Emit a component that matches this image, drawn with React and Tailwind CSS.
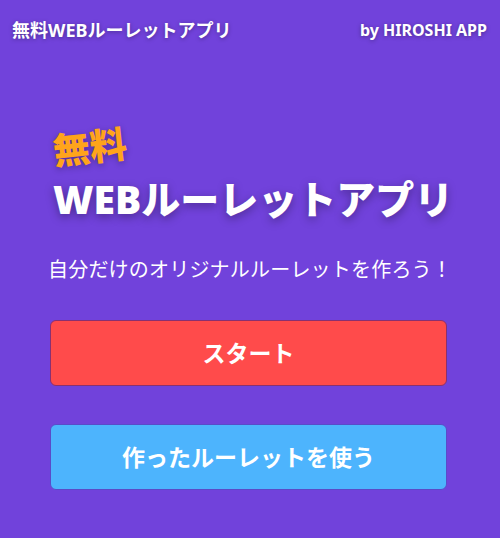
import React from 'react';

const App = () => {
    return (
        <div
            className="w-[500px] h-[538px] bg-[#7142db] text-white overflow-hidden"
            style={{ fontFamily: '"Noto Sans", "Noto Sans CJK JP", sans-serif' }}
        >
            {/* Header */}
            <div className="flex items-center justify-between px-3 pt-[21px]">
                <span className="text-[18px] font-bold leading-none [text-shadow:0_1px_4px_rgba(0,0,0,0.35)]">無料WEBルーレットアプリ</span>
                <span className="text-[16px] font-bold leading-none pr-[1px] [text-shadow:0_1px_4px_rgba(0,0,0,0.35)]">by HIROSHI APP</span>
            </div>

            {/* Hero */}
            <div className="pl-[53px] pt-[93px]">
                <div className="text-[37px] font-black leading-none text-[#ffa41b] -rotate-6 origin-left w-fit [text-shadow:0_2px_6px_rgba(0,0,0,0.3)]">
                    無料
                </div>
                <h1 className="mt-[10px] text-[39px] font-black leading-none [text-shadow:0_3px_10px_rgba(0,0,0,0.35)]">
                    WEBルーレットアプリ
                </h1>
            </div>

            <p className="mt-[42px] text-center text-[20px] leading-none tracking-[0.01em]">
                自分だけのオリジナルルーレットを作ろう！
            </p>

            {/* Buttons */}
            <div className="mt-[40px] pl-[50px] pr-[53px] flex flex-col gap-[38px]">
                <button className="h-[66px] w-full rounded-md bg-[#ff4b4b] border border-[#8a3070] text-[23px] font-bold text-white">
                    スタート
                </button>
                <button className="h-[66px] w-full rounded-md bg-[#4db4fd] border border-[#5a4bc8] text-[23px] font-bold text-white">
                    作ったルーレットを使う
                </button>
            </div>
        </div>
    );
};

export default App;
